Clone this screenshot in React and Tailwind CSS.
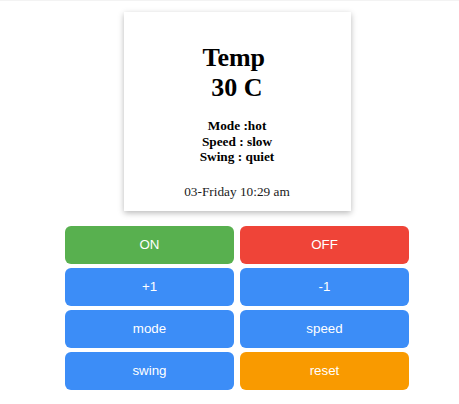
import React from "react";

const buttons = [
    { label: "ON", color: "bg-[#58b04f]" },
    { label: "OFF", color: "bg-[#ef4438]" },
    { label: "+1", color: "bg-[#3c8df7]" },
    { label: "-1", color: "bg-[#3c8df7]" },
    { label: "mode", color: "bg-[#3c8df7]" },
    { label: "speed", color: "bg-[#3c8df7]" },
    { label: "swing", color: "bg-[#3c8df7]" },
    { label: "reset", color: "bg-[#f99a00]" },
];

export default function App() {
    return (
        <div className="min-h-screen bg-white">
            <div className="h-px bg-[#f3f3f3]"></div>
            <div className="w-[344px] ml-[65px] pt-[11px] flex flex-col items-center">
                {/* status card */}
                <div className="w-[227px] h-[199px] pt-[31px] bg-white shadow-[0_2px_6px_rgba(0,0,0,0.28)] flex flex-col items-center text-black font-['Liberation_Serif',serif]">
                    <h2 className="text-[26px] font-bold leading-[30px] text-center">
                        Temp{"\u00a0"}
                        <br />
                        30 C
                    </h2>
                    <h5 className="mt-[15px] text-[13.3px] font-bold leading-[15.5px] text-center">
                        Mode :hot
                        <br />
                        Speed : slow
                        <br />
                        Swing : quiet
                    </h5>
                    <p className="mt-[19px] text-[13.3px] leading-[16px] text-[#1a1a1a]">03-Friday 10:29 am</p>
                </div>

                {/* controls */}
                <div className="w-full mt-[15px] grid grid-cols-2 gap-x-[6px] gap-y-[4px]">
                    {buttons.map((b) => (
                        <button
                            key={b.label}
                            className={`${b.color} h-[38px] rounded-md text-white text-[13.33px] font-['Liberation_Sans',Arial,sans-serif]`}
                        >
                            {b.label}
                        </button>
                    ))}
                </div>
            </div>
        </div>
    );
}
